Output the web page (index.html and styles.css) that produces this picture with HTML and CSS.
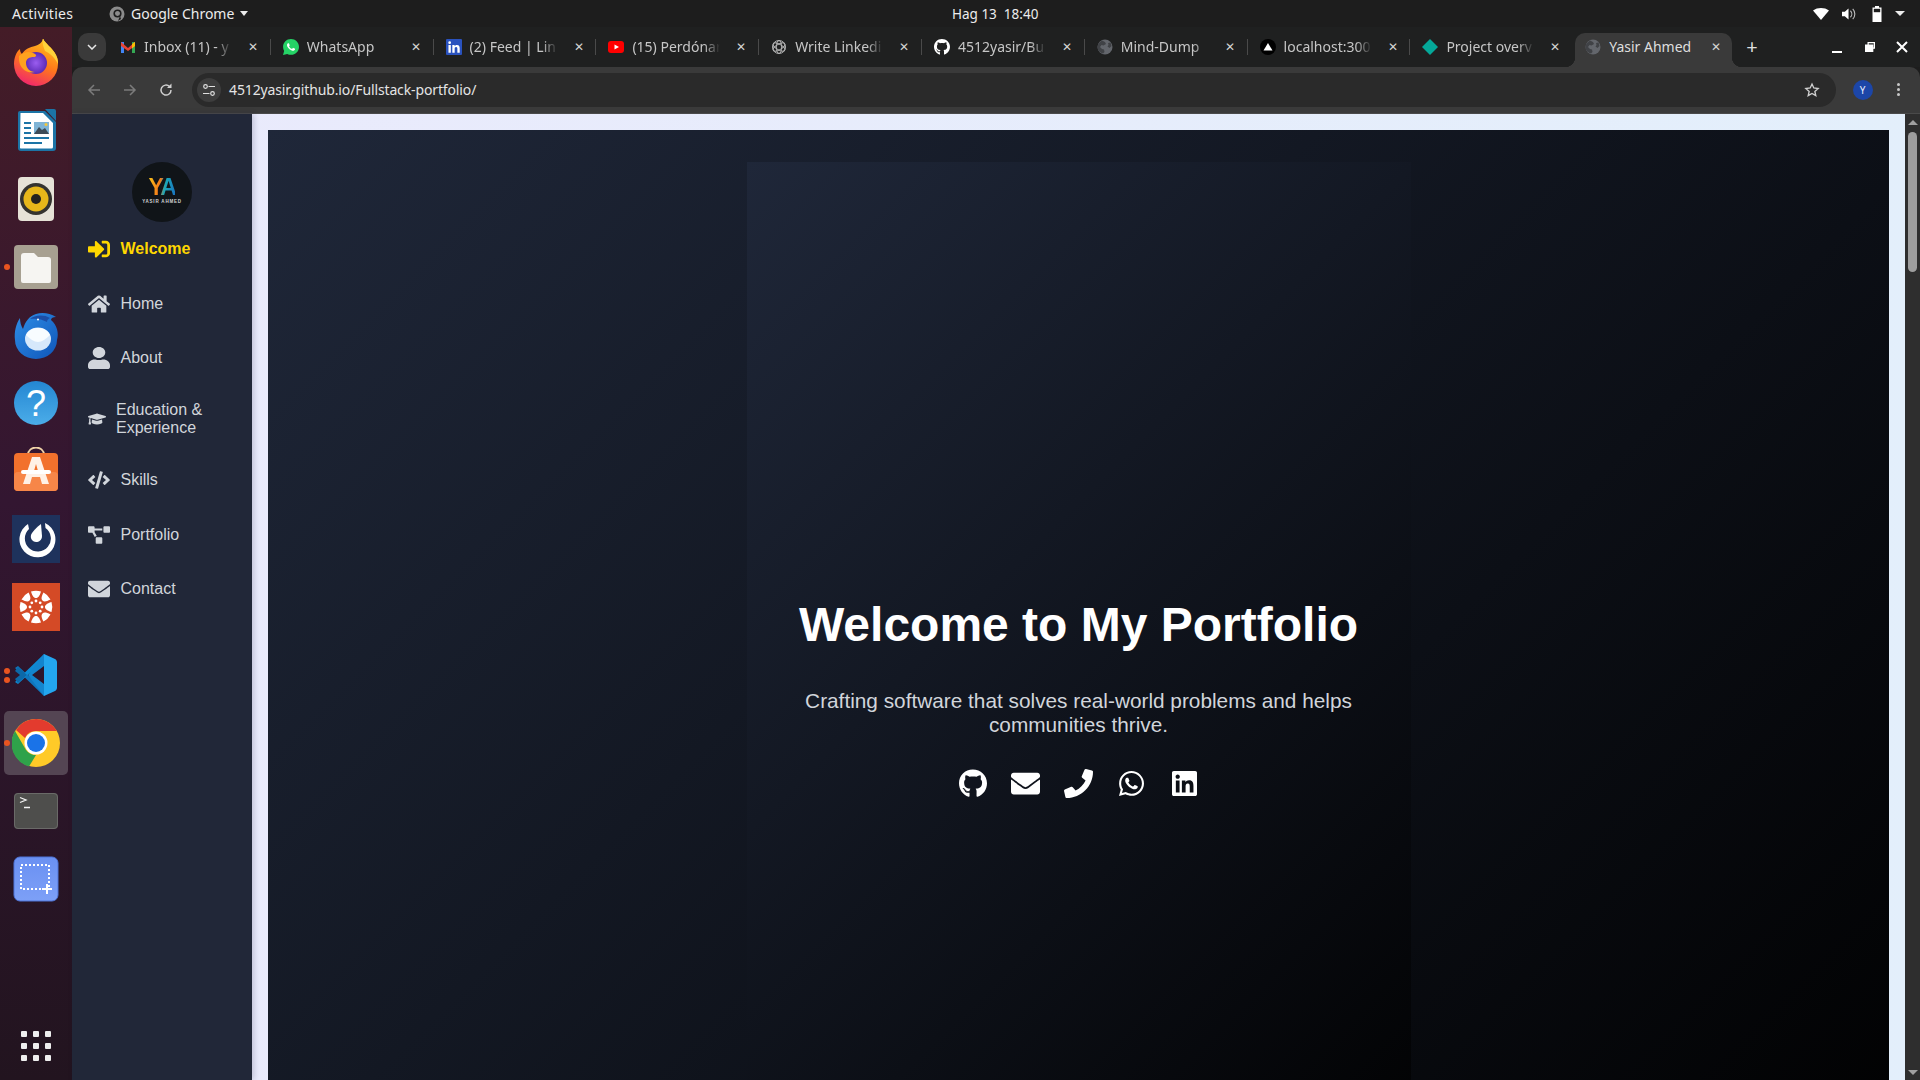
FILE: index.html
```html
<!DOCTYPE html>
<html lang="en">
<head>
    <meta charset="UTF-8">
    <title>Yasir Ahmed</title>
    <link rel="stylesheet" href="styles.css">
</head>
<body>
    <svg class="sprite" xmlns="http://www.w3.org/2000/svg">
        <symbol id="i-github" viewBox="0 0 496 512"><path d="M165.9 397.4c0 2-2.3 3.6-5.2 3.6-3.3.3-5.6-1.3-5.6-3.6 0-2 2.3-3.6 5.2-3.6 3-.3 5.6 1.3 5.6 3.6zm-31.1-4.5c-.7 2 1.3 4.3 4.3 4.9 2.6 1 5.6 0 6.2-2s-1.3-4.3-4.3-5.2c-2.6-.7-5.5.3-6.2 2.3zm44.2-1.7c-2.9.7-4.9 2.6-4.6 4.9.3 2 2.9 3.3 5.9 2.6 2.9-.7 4.9-2.6 4.6-4.6-.3-1.9-3-3.2-5.9-2.9zM244.8 8C106.1 8 0 113.3 0 252c0 110.9 69.8 205.8 169.5 239.2 12.8 2.3 17.3-5.6 17.3-12.1 0-6.2-.3-40.4-.3-61.4 0 0-70 15-84.7-29.8 0 0-11.4-29.1-27.8-36.6 0 0-22.9-15.7 1.6-15.4 0 0 24.9 2 38.6 25.8 21.9 38.6 58.6 27.5 72.9 20.9 2.3-16 8.8-27.1 16-33.7-55.9-6.2-112.3-14.3-112.3-110.5 0-27.5 7.6-41.3 23.6-58.9-2.6-6.5-11.1-33.3 2.6-67.9 20.9-6.5 69 27 69 27 20-5.6 41.5-8.5 62.8-8.5s42.8 2.9 62.8 8.5c0 0 48.1-33.6 69-27 13.7 34.7 5.2 61.4 2.6 67.9 16 17.7 25.8 31.5 25.8 58.9 0 96.5-58.9 104.2-114.8 110.5 9.2 7.9 17 22.9 17 46.4 0 33.7-.3 75.4-.3 83.6 0 6.5 4.6 14.4 17.3 12.1C428.2 457.8 496 362.9 496 252 496 113.3 383.5 8 244.8 8zM97.2 352.9c-1.3 1-1 3.3.7 5.2 1.6 1.6 3.9 2.3 5.2 1 1.3-1 1-3.3-.7-5.2-1.6-1.6-3.9-2.3-5.2-1zm-10.8-8.1c-.7 1.3.3 2.9 2.3 3.9 1.6 1 3.6.7 4.3-.7.7-1.3-.3-2.9-2.3-3.9-2-.6-3.6-.3-4.3.7zm32.4 35.6c-1.6 1.3-1 4.3 1.3 6.2 2.3 2.3 5.2 2.6 6.5 1 1.3-1.3.7-4.3-1.3-6.2-2.2-2.3-5.2-2.6-6.5-1zm-11.4-14.7c-1.6 1-1.6 3.6 0 5.9 1.6 2.3 4.3 3.3 5.6 2.3 1.6-1.3 1.6-3.9 0-6.2-1.4-2.3-4-3.3-5.6-2z"/></symbol>
        <symbol id="i-envelope" viewBox="0 0 512 512"><path d="M502.3 190.8c3.9-3.1 9.7-.2 9.7 4.7V400c0 26.5-21.5 48-48 48H48c-26.5 0-48-21.5-48-48V195.6c0-5 5.7-7.8 9.7-4.7 22.4 17.4 52.1 39.5 154.1 113.6 21.1 15.4 56.7 47.8 92.2 47.6 35.7.3 72-32.8 92.3-47.6 102-74.1 131.6-96.3 154-113.7zM256 320c23.2.4 56.6-29.2 73.4-41.4 132.7-96.3 142.8-104.7 173.4-128.7 5.8-4.5 9.2-11.5 9.2-18.9v-19c0-26.5-21.5-48-48-48H48C21.5 64 0 85.5 0 112v19c0 7.4 3.4 14.3 9.2 18.9 30.6 23.9 40.7 32.4 173.4 128.7 16.8 12.2 50.2 41.8 73.4 41.4z"/></symbol>
        <symbol id="i-phone" viewBox="0 0 512 512"><path d="M493.4 24.6l-104-24c-11.3-2.6-22.9 3.3-27.5 13.9l-48 112c-4.2 9.8-1.4 21.3 6.9 28l60.6 49.6c-36 76.7-98.9 140.5-177.2 177.2l-49.6-60.6c-6.8-8.3-18.2-11.1-28-6.9l-112 48C3.9 366.5-2 378.1.6 389.4l24 104C27.1 504.2 36.7 512 48 512c256.1 0 464-207.5 464-464 0-11.2-7.7-20.9-18.6-23.4z"/></symbol>
        <symbol id="i-whatsapp" viewBox="0 0 448 512"><path d="M380.9 97.1C339 55.1 283.2 32 223.9 32c-122.4 0-222 99.6-222 222 0 39.1 10.2 77.3 29.6 111L0 480l117.7-30.9c32.4 17.7 68.9 27 106.1 27h.1c122.3 0 224.1-99.6 224.1-222 0-59.3-25.2-115-67.1-157zm-157 341.6c-33.2 0-65.7-8.9-94-25.7l-6.7-4-69.8 18.3L72 359.2l-4.4-7c-18.5-29.4-28.2-63.3-28.2-98.2 0-101.7 82.8-184.5 184.6-184.5 49.3 0 95.6 19.2 130.4 54.1 34.8 34.9 56.2 81.2 56.1 130.5 0 101.8-84.9 184.6-186.6 184.6zm101.2-138.2c-5.5-2.8-32.8-16.2-37.9-18-5.1-1.9-8.8-2.8-12.5 2.8-3.7 5.6-14.3 18-17.6 21.8-3.2 3.7-6.5 4.2-12 1.4-32.6-16.3-54-29.1-75.5-66-5.7-9.8 5.7-9.1 16.3-30.3 1.8-3.7.9-6.9-.5-9.7-1.4-2.8-12.5-30.1-17.1-41.2-4.5-10.8-9.1-9.3-12.5-9.5-3.2-.2-6.9-.2-10.6-.2-3.7 0-9.7 1.4-14.8 6.9-5.1 5.6-19.4 19-19.4 46.3 0 27.3 19.9 53.7 22.6 57.4 2.8 3.7 39.1 59.7 94.8 83.8 35.2 15.2 49 16.5 66.6 13.9 10.7-1.6 32.8-13.4 37.4-26.4 4.6-13 4.6-24.1 3.2-26.4-1.3-2.5-5-3.9-10.5-6.6z"/></symbol>
        <symbol id="i-linkedin" viewBox="0 0 448 512"><path d="M416 32H31.9C14.3 32 0 46.5 0 64.3v383.4C0 465.5 14.3 480 31.9 480H416c17.6 0 32-14.5 32-32.3V64.3c0-17.8-14.4-32.3-32-32.3zM135.4 416H69V202.2h66.5V416zm-33.2-243c-21.3 0-38.5-17.3-38.5-38.5S80.9 96 102.2 96c21.2 0 38.5 17.3 38.5 38.5 0 21.3-17.2 38.5-38.5 38.5zm282.1 243h-66.4V312c0-24.8-.5-56.7-34.5-56.7-34.6 0-39.9 27-39.9 54.9V416h-66.4V202.2h63.7v29.2h.9c8.9-16.8 30.6-34.5 62.9-34.5 67.2 0 79.7 44.3 79.7 101.9V416z"/></symbol>
        <symbol id="i-globe" viewBox="0 0 16 16"><circle cx="8" cy="8" r="7.5" fill="#63666c"/><path d="M5 1.5l3 1.5 1 2-2.500 1.500L4.500 6 3 8l2 2 2 .5.500 2.500-1.500 1.500A6.500 6.500 0 0 1 2 4zM11 4l2.500-.5 1 3.500-2 2-2-1.500 1-1.500z" fill="#404246"/></symbol>
    </svg>

    <header class="topbar">
        <div class="topbar-left">
            <span class="activities">Activities</span>
            <span class="app-menu">
                <svg class="app-icon" viewBox="0 0 16 16"><circle cx="8" cy="8" r="7.500" fill="#8b8b8b"/><circle cx="8.500" cy="7.500" r="3.300" fill="none" stroke="#1d1d1d" stroke-width="1.600"/><path d="M11 10l-2 5 3-2z" fill="#1d1d1d"/></svg>
                Google Chrome
                <i class="caret"></i>
            </span>
        </div>
        <div class="clock">Hag 13&nbsp;&nbsp;18:40</div>
        <div class="tray">
            <svg width="16" height="12" viewBox="0 0 16 12"><path d="M0 2.500C4.500-.8 11.500-.8 16 2.500L8 12z" fill="#fff"/></svg>
            <svg width="14" height="14" viewBox="0 0 15 14"><path d="M0 4.500h3L7 1v12L3 9.500H0z" fill="#fff"/><path d="M9 3.500c2 2 2 5 0 7M11.500 1.500c3 3 3 8 0 11" fill="none" stroke="#bbb" stroke-width="1.200"/></svg>
            <svg class="battery" width="10" height="16" viewBox="0 0 10 16"><path d="M3 0h4v1.500h2.500V16H.5V1.500H3z" fill="#fff"/><rect x="1.800" y="2.800" width="6.400" height="3.400" fill="#1d1d1d"/></svg>
            <i class="caret caret-tray"></i>
        </div>
    </header>

    <div class="desktop">
        <aside class="dock">
            <div class="dock-item">
                <svg width="48" height="48" viewBox="0 3 48 48"><defs><linearGradient id="ffa" x1="0.700" y1="0" x2="0.300" y2="1"><stop offset="0" stop-color="#ffc31f"/><stop offset="0.500" stop-color="#ff7a1a"/><stop offset="1" stop-color="#f0246e"/></linearGradient><radialGradient id="ffb"><stop offset="0" stop-color="#9a5df0"/><stop offset="1" stop-color="#5c2bb5"/></radialGradient></defs><path d="M31 2c1 5 9 9 13 17 2 4 2 7 2 9a22 22 0 0 1-44 0c0-6 2-12 6-15 0 3 1 4 2 5 3-5 8-7 13-8 4-1 8-4 8-8z" fill="url(#ffa)"/><path d="M31 2c1 5 9 9 13 17 2 4 2 7 2 9-3-6-8-11-13-13-2-5-3-9-2-13z" fill="#ffd23a"/><circle cx="24" cy="27" r="11" fill="url(#ffb)"/><path d="M7 20c5-5 12-5 16-2 2 1 1 3-1 3-5 0-8 2-8 6 0 5 4 9 9 9-8 2-15-3-16-12z" fill="#ffa21f"/></svg>
            </div>
            <div class="dock-item">
                <svg width="48" height="48" viewBox="0 0 48 48"><path d="M8 4h25l11 11v26a3 3 0 0 1-3 3H9a3 3 0 0 1-3-3V6a2 2 0 0 1 2-2z" fill="#1c74a6"/><path d="M8.500 6H31l10 10v24a1.500 1.500 0 0 1-1.500 1.500h-31A1 1 0 0 1 8 40.500z" fill="#fff"/><path d="M33 2h9a2 2 0 0 1 2 2v10z" fill="#1c74a6"/><path d="M12 15h7v2h-7zM12 20h7v2h-7zM12 25h7v2h-7zM12 30h25v2H12zM12 35h18v2H12z" fill="#1c74a6"/><rect x="22" y="15" width="15" height="12" fill="#7fb4d6"/><path d="M22 27l5-7 3 3 3-2 4 6z" fill="#3d4b57"/><circle cx="34" cy="17.500" r="1.500" fill="#f3c63d"/></svg>
            </div>
            <div class="dock-item">
                <svg width="48" height="48" viewBox="0 0 48 48"><rect x="6" y="2" width="36" height="44" rx="4" fill="#e6e2d7"/><circle cx="24" cy="24" r="16" fill="#34332f"/><circle cx="24" cy="24" r="12.500" fill="#e7b71a"/><circle cx="24" cy="24" r="5" fill="#23221f"/></svg>
            </div>
            <div class="dock-item">
                <i class="run-dot"></i>
                <svg width="48" height="48" viewBox="0 0 48 48"><rect x="2" y="2" width="44" height="44" rx="4" fill="#a7a091"/><path d="M9 13a3 3 0 0 1 3-3h10l4 4h10a3 3 0 0 1 3 3v21a2 2 0 0 1-2 2H11a2 2 0 0 1-2-2z" fill="#f6f5f2"/></svg>
            </div>
            <div class="dock-item">
                <svg width="48" height="48" viewBox="0 0 48 48"><defs><linearGradient id="tb" x1="0" y1="0" x2="1" y2="1"><stop offset="0" stop-color="#2f8fe8"/><stop offset="1" stop-color="#0f55b8"/></linearGradient></defs><path d="M24 3c6-2 14-1 20 3-3 0-5 1-5 3 6 5 8 13 6 20a21 19 0 0 1-42 0c-1-8 1-16 5-22 0 4 1 8 3 11 2-7 6-13 13-15z" fill="url(#tb)"/><path d="M18 8c4-4 14-5 20-1-2 1-3 2-3 4-5-3-11-4-17-3z" fill="#1c4ea6"/><circle cx="26" cy="8.500" r="1" fill="#fff"/><ellipse cx="26" cy="28" rx="13" ry="11.500" fill="#d6e8fb"/><path d="M14 24c4 4 8 7 12 7s8-3 12-7c-3-6-8-7-12-7s-9 1-12 7z" fill="#f8fcff"/></svg>
            </div>
            <div class="dock-item">
                <svg width="48" height="48" viewBox="0 0 48 48"><defs><linearGradient id="hp" x1="0" y1="0" x2="0" y2="1"><stop offset="0" stop-color="#2486d2"/><stop offset="1" stop-color="#4bade9"/></linearGradient></defs><circle cx="24" cy="24" r="22" fill="url(#hp)"/><text x="24" y="37" class="dock-glyph" font-size="36">?</text></svg>
            </div>
            <div class="dock-item">
                <svg width="48" height="48" viewBox="0 3 48 48"><path d="M16 11c0-10 16-10 16 0" fill="none" stroke="#f0d3a8" stroke-width="1.800"/><rect x="2" y="9" width="44" height="38" rx="4" fill="#f2712c"/><rect x="2" y="28" width="44" height="19" rx="4" fill="#f78648"/><path d="M20 13h8l9 27h-7l-2-7h-8l-2 7h-7zM22 27h4l-2-7z" fill="#fff1e6"/><rect x="9" y="26" width="30" height="4" rx="2" fill="#fff"/></svg>
            </div>
            <div class="dock-item">
                <svg width="48" height="48" viewBox="0 0 48 48"><rect width="48" height="48" fill="#1e325c"/><path d="M16 9A18 18 0 1 0 33 8l.5 5a13 13 0 1 1-16.500 1z" fill="#fff"/><path d="M29 9l1 12c0 4-3 6-6 6s-6-3-5-7c1-3 6-8 10-11z" fill="#fff"/></svg>
            </div>
            <div class="dock-item">
                <svg width="48" height="48" viewBox="0 0 48 48"><rect width="48" height="48" fill="#d44a26"/><g fill="#fff"><path d="M15 24c0-1.800-1.500-3.500-6.500-5a16 16 0 0 0 0 10c5-1.500 6.500-3.200 6.500-5zM33 24c0 1.800 1.500 3.500 6.500 5a16 16 0 0 0 0-10c-5 1.500-6.500 3.200-6.500 5zM24 15c1.800 0 3.500-1.500 5-6.500a16 16 0 0 0-10 0c1.500 5 3.200 6.500 5 6.500zM24 33c-1.800 0-3.500 1.500-5 6.500a16 16 0 0 0 10 0c-1.500-5-3.200-6.500-5-6.500zM17.500 17.500c1.300-1.300 1.400-3.500-1-8a16 16 0 0 0-7 7c4.500 2.400 6.700 2.300 8 1zM30.500 30.500c-1.300 1.300-1.400 3.500 1 8a16 16 0 0 0 7-7c-4.500-2.400-6.700-2.300-8-1zM30.500 17.500c1.300 1.300 3.500 1.400 8-1a16 16 0 0 0-7-7c-2.400 4.500-2.300 6.700-1 8zM17.500 30.500c-1.300-1.300-3.500-1.400-8 1a16 16 0 0 0 7 7c2.400-4.500 2.300-6.700 1-8z"/><circle cx="24" cy="18" r="1.400"/><circle cx="24" cy="30" r="1.400"/><circle cx="18" cy="24" r="1.400"/><circle cx="30" cy="24" r="1.400"/><circle cx="19.800" cy="19.800" r="1.400"/><circle cx="28.200" cy="19.800" r="1.400"/><circle cx="19.800" cy="28.200" r="1.400"/><circle cx="28.200" cy="28.200" r="1.400"/></g></svg>
            </div>
            <div class="dock-item">
                <i class="run-dot run-dot-a"></i><i class="run-dot run-dot-b"></i>
                <svg width="48" height="48" viewBox="0 0 48 48"><path d="M3 17l3-2 28 26-2 4z" fill="#0f76bd"/><path d="M3 31l3 2L34 7l-2-4z" fill="#0e8ad3"/><path d="M8 24l-5 4 3 4 9-8-9-8-3 4z" fill="#0c68a8"/><path d="M32 3l11 5c1 .5 2 2 2 3v26c0 1-1 2.500-2 3l-11 5z" fill="#23a6ef"/><path d="M32 3l-16 21 16 21V33L20 24l12-9z" fill="#1385cf"/></svg>
            </div>
            <div class="dock-item dock-item-active">
                <i class="run-dot"></i>
                <svg width="48" height="48" viewBox="0 0 48 48"><circle cx="24" cy="24" r="24" fill="#ffca28"/><path d="M24 0a24 24 0 0 1 21 12H24a12 12 0 0 0-11 7L4 11A24 24 0 0 1 24 0z" fill="#e33b2e"/><path d="M3 12l11 19a12 12 0 0 0 10 5l-7 11.500A24 24 0 0 1 3 12z" fill="#2fa24a"/><circle cx="24" cy="24" r="11.500" fill="#fff"/><circle cx="24" cy="24" r="9" fill="#1a73e8"/></svg>
            </div>
            <div class="dock-item">
                <svg width="48" height="48" viewBox="0 0 48 48"><rect x="2" y="6" width="44" height="36" rx="4" fill="#4e4e4c"/><rect x="2.500" y="6.500" width="43" height="35" rx="3.500" fill="none" stroke="#6a6a68"/><path d="M8 10.500l6 2.500-6 2.500M12 20.500h6" fill="none" stroke="#f2f2f2" stroke-width="1.300"/></svg>
            </div>
            <div class="dock-item">
                <svg width="48" height="48" viewBox="0 0 48 48"><defs><linearGradient id="sc" x1="0" y1="0" x2="0" y2="1"><stop offset="0" stop-color="#6a90f2"/><stop offset="1" stop-color="#7da0f7"/></linearGradient></defs><rect x="2" y="2" width="44" height="44" rx="6" fill="url(#sc)" stroke="#4f75d8"/><rect x="9" y="10" width="28" height="24" fill="none" stroke="#fff" stroke-width="2" stroke-dasharray="2 2"/><path d="M30 34h10M35 29v10" stroke="#fff" stroke-width="2"/></svg>
            </div>
            <div class="dock-grid">
                <i></i><i></i><i></i><i></i><i></i><i></i><i></i><i></i><i></i>
            </div>
        </aside>

        <div class="browser">
            <div class="tabstrip">
                <button class="tab-search"><svg width="10" height="6" viewBox="0 0 10 6"><path d="M1 1l4 4 4-4" fill="none" stroke="#e6e6e6" stroke-width="1.500"/></svg></button>
                <div class="tab">
                    <svg class="favicon" viewBox="0 0 16 16"><path d="M1 3h3v11H1z" fill="#4285f4"/><path d="M12 3h3v11h-3z" fill="#34a853"/><path d="M1 3l7 6 7-6v4L8 12 1 7z" fill="#ea4335"/><path d="M15 3v4l-3 2.500V5z" fill="#fbbc04"/></svg>
                    <span class="tab-title">Inbox (11) - y</span><span class="tab-x">✕</span>
                </div>
                <div class="tab">
                    <svg class="favicon" viewBox="0 32 448 448"><path d="M224 32C101 32 2 131 2 254c0 39 10 77 30 111L0 480l118-31c32 18 69 27 106 27 122 0 224-100 224-222C448 131 347 32 224 32z" fill="#25d366"/><path d="M325 300c-5-3-33-16-38-18-5-2-9-3-12 3-4 6-15 18-18 22-3 4-6 4-12 1-33-16-54-29-75-66-6-10 6-9 16-30 2-4 1-7 0-10-1-3-13-30-17-41-5-11-9-9-13-10h-10c-4 0-10 1-15 7-5 6-19 19-19 46s20 54 23 57c3 4 39 60 95 84 35 15 49 17 67 14 11-2 33-13 37-26 5-13 5-24 3-26-1-3-5-4-11-7z" fill="#fff"/></svg>
                    <span class="tab-title">WhatsApp</span><span class="tab-x">✕</span>
                </div>
                <div class="tab">
                    <svg class="favicon" viewBox="0 32 448 448"><rect y="32" width="448" height="448" rx="30" fill="#2a52be"/><path d="M135 416H69V202h66zM102 173a38 38 0 1 1 0-77 38 38 0 0 1 0 77zM384 416h-66V312c0-25 0-57-35-57-34 0-40 27-40 55v106h-66V202h64v29h1c9-17 30-34 63-34 67 0 79 44 79 102z" fill="#fff"/></svg>
                    <span class="tab-title">(2) Feed | Lin</span><span class="tab-x">✕</span>
                </div>
                <div class="tab">
                    <svg class="favicon" viewBox="0 0 16 16"><rect y="2" width="16" height="12" rx="3" fill="#f00"/><path d="M6.500 5.500L11 8l-4.500 2.500z" fill="#fff"/></svg>
                    <span class="tab-title">(15) Perdónar</span><span class="tab-x">✕</span>
                </div>
                <div class="tab">
                    <svg class="favicon" viewBox="0 0 16 16"><g fill="none" stroke="#b5b5b5" stroke-width="1"><circle cx="8" cy="8" r="6.500"/><ellipse cx="8" cy="8" rx="6.500" ry="2.700" transform="rotate(30 8 8)"/><ellipse cx="8" cy="8" rx="6.500" ry="2.700" transform="rotate(90 8 8)"/><ellipse cx="8" cy="8" rx="6.500" ry="2.700" transform="rotate(150 8 8)"/></g></svg>
                    <span class="tab-title">Write Linkedi</span><span class="tab-x">✕</span>
                </div>
                <div class="tab">
                    <svg class="favicon" viewBox="0 8 496 496" fill="#fff"><use href="#i-github" width="496" height="512"/></svg>
                    <span class="tab-title">4512yasir/Bu</span><span class="tab-x">✕</span>
                </div>
                <div class="tab">
                    <svg class="favicon" viewBox="0 0 16 16"><use href="#i-globe" width="16" height="16"/></svg>
                    <span class="tab-title">Mind-Dump</span><span class="tab-x">✕</span>
                </div>
                <div class="tab">
                    <svg class="favicon" viewBox="0 0 16 16"><circle cx="8" cy="8" r="8" fill="#000"/><path d="M8 4l4.500 7.500h-9z" fill="#fff"/></svg>
                    <span class="tab-title">localhost:300</span><span class="tab-x">✕</span>
                </div>
                <div class="tab tab-noline">
                    <svg class="favicon" viewBox="0 0 16 16"><path d="M8 0l8 8-8 8-8-8z" fill="#05a899"/></svg>
                    <span class="tab-title">Project overv</span><span class="tab-x">✕</span>
                </div>
                <div class="tab tab-active">
                    <svg class="favicon" viewBox="0 0 16 16"><use href="#i-globe" width="16" height="16"/></svg>
                    <span class="tab-title">Yasir Ahmed</span><span class="tab-x">✕</span>
                </div>
                <span class="tab-new">+</span>
                <div class="window-btns">
                    <svg width="12" height="12" viewBox="0 0 12 12"><path d="M0 10h10v2H0z" fill="#fff"/></svg>
                    <svg width="10" height="10" viewBox="0 0 12 12"><path d="M3 0h9v8h-2v4H0V3h3zM4.500 1.500V3H10v3.500h.500v-5z" fill="#fff" fill-rule="evenodd"/></svg>
                    <svg width="12" height="12" viewBox="0 0 12 12"><path d="M1 1l10 10M11 1L1 11" stroke="#fff" stroke-width="2"/></svg>
                </div>
            </div>

            <div class="toolbar">
                <svg class="tool" width="16" height="16" viewBox="0 0 16 16"><path d="M14 8H3M8 3L3 8l5 5" fill="none" stroke="#7b7b7b" stroke-width="1.500"/></svg>
                <svg class="tool" width="16" height="16" viewBox="0 0 16 16"><path d="M2 8h11M8 3l5 5-5 5" fill="none" stroke="#7b7b7b" stroke-width="1.500"/></svg>
                <svg class="tool" width="16" height="16" viewBox="0 0 16 16"><path d="M13 8a5 5 0 1 1-1.500-3.500" fill="none" stroke="#d0d0d0" stroke-width="1.500"/><path d="M13.500 1.500v4.500H9z" fill="#d0d0d0"/></svg>
                <div class="omnibox">
                    <span class="site-info"><svg width="14" height="14" viewBox="0 0 14 14" fill="none" stroke="#e0e0e0" stroke-width="1.200"><circle cx="3.500" cy="3.500" r="1.800"/><path d="M6.500 3.500H13M1 10.500h6.500"/><circle cx="10.500" cy="10.500" r="1.800"/></svg></span>
                    <span class="url">4512yasir.github.io/Fullstack-portfolio/</span>
                    <svg class="star" width="16" height="16" viewBox="0 0 24 24"><path d="M12 3l2.700 6 6.500.7-4.900 4.400 1.400 6.400L12 17.200 6.300 20.500l1.400-6.400-4.900-4.400 6.500-.7z" fill="none" stroke="#d0d0d0" stroke-width="2"/></svg>
                </div>
                <span class="avatar">Y</span>
                <span class="kebab"><i></i><i></i><i></i></span>
            </div>

            <div class="page">
                <aside class="sidebar">
                    <div class="logo">
                        <span class="logo-ya">YA</span>
                        <span class="logo-name">YASIR AHMED</span>
                    </div>
                    <nav class="side-nav">
                        <a class="nav-item nav-item-active" href="#">
                            <svg class="nav-icon" viewBox="0 0 512 512"><path d="M416 448h-84c-6.600 0-12-5.400-12-12v-40c0-6.600 5.400-12 12-12h84c17.700 0 32-14.300 32-32V160c0-17.700-14.300-32-32-32h-84c-6.600 0-12-5.400-12-12V76c0-6.600 5.400-12 12-12h84c53 0 96 43 96 96v192c0 53-43 96-96 96zm-47-201L201 79c-15-15-41-4.500-41 17v96H24c-13.300 0-24 10.700-24 24v96c0 13.300 10.700 24 24 24h136v96c0 21.500 26 32 41 17l168-168c9.300-9.400 9.300-24.600 0-34z"/></svg>
                            Welcome
                        </a>
                        <a class="nav-item" href="#">
                            <svg class="nav-icon" viewBox="0 0 576 512"><path d="M280.370 148.260L96 300.110V464a16 16 0 0 0 16 16l112.060-.29a16 16 0 0 0 15.920-16V368a16 16 0 0 1 16-16h64a16 16 0 0 1 16 16v95.640a16 16 0 0 0 16 16.050L464 480a16 16 0 0 0 16-16V300L295.670 148.260a12.190 12.190 0 0 0-15.300 0zM571.600 251.470L488 182.560V44.050a12 12 0 0 0-12-12h-56a12 12 0 0 0-12 12v72.610L318.470 43a48 48 0 0 0-61 0L4.340 251.470a12 12 0 0 0-1.600 16.900l25.500 31A12 12 0 0 0 45.150 301l235.220-193.740a12.190 12.190 0 0 1 15.300 0L530.900 301a12 12 0 0 0 16.900-1.600l25.500-31a12 12 0 0 0-1.700-16.930z"/></svg>
                            Home
                        </a>
                        <a class="nav-item" href="#">
                            <svg class="nav-icon" viewBox="0 0 448 512" preserveAspectRatio="none"><path d="M224 256c70.700 0 128-57.300 128-128S294.700 0 224 0 96 57.300 96 128s57.300 128 128 128zm89.600 32h-16.700c-22.200 10.200-46.900 16-72.900 16s-50.600-5.800-72.900-16h-16.700C60.200 288 0 348.200 0 422.400V464c0 26.500 21.500 48 48 48h352c26.500 0 48-21.500 48-48v-41.600c0-74.200-60.200-134.400-134.400-134.400z"/></svg>
                            About
                        </a>
                        <a class="nav-item nav-item-wrap" href="#">
                            <svg class="nav-icon nav-icon-small" viewBox="0 0 640 512"><path d="M622.340 153.200L343.400 67.500c-15.200-4.670-31.600-4.670-46.790 0L17.660 153.200c-23.540 7.230-23.540 38.360 0 45.590l48.630 14.940c-10.670 13.190-17.230 29.280-17.880 46.900C38.780 266.150 32 276.110 32 288c0 10.780 5.680 19.850 13.860 25.650L20.330 428.530C18.110 438.520 25.710 448 35.940 448h56.110c10.240 0 17.840-9.480 15.620-19.470L82.140 313.650C90.320 307.850 96 298.780 96 288c0-11.570-6.470-21.250-15.660-26.870.76-15.020 8.440-28.300 20.690-36.720L296.600 284.500c9.060 2.780 26.440 6.250 46.790 0l278.950-85.700c23.550-7.240 23.550-38.360 0-45.600zM352.790 315.090c-28.530 8.760-52.840 3.920-65.590 0l-145.020-44.550L128 384c0 35.350 85.960 64 192 64s192-28.650 192-64l-14.180-113.470-145.030 44.560z"/></svg>
                            Education &amp; Experience
                        </a>
                        <a class="nav-item" href="#">
                            <svg class="nav-icon" viewBox="0 0 640 512"><path d="M278.900 511.500l-61-17.700c-6.400-1.800-10-8.500-8.200-14.900L346.200 8.700c1.800-6.400 8.500-10 14.900-8.200l61 17.700c6.400 1.800 10 8.500 8.200 14.900L293.800 503.300c-1.900 6.400-8.500 10.100-14.900 8.200zm-114-112.200l43.500-46.400c4.600-4.900 4.300-12.700-.8-17.200L117 256l90.600-79.700c5.100-4.500 5.500-12.300.8-17.200l-43.500-46.400c-4.500-4.800-12.100-5.100-17-.5L3.800 247.200c-5.100 4.700-5.100 12.800 0 17.500l144.100 135.100c4.900 4.600 12.500 4.400 17-.5zm327.200.6l144.100-135.100c5.100-4.700 5.100-12.800 0-17.500L492.100 112.100c-4.800-4.500-12.400-4.300-17 .5L431.600 159c-4.600 4.900-4.300 12.700.8 17.200L523 256l-90.600 79.700c-5.100 4.500-5.500 12.300-.8 17.200l43.500 46.400c4.500 4.900 12.100 5.100 17 .6z"/></svg>
                            Skills
                        </a>
                        <a class="nav-item" href="#">
                            <svg class="nav-icon" viewBox="0 0 640 512"><path d="M384 320H256c-17.670 0-32 14.330-32 32v128c0 17.670 14.330 32 32 32h128c17.670 0 32-14.330 32-32V352c0-17.670-14.330-32-32-32zM192 32c0-17.670-14.330-32-32-32H32C14.330 0 0 14.330 0 32v128c0 17.670 14.330 32 32 32h95.720l73.160 128.040C211.980 300.980 232.400 288 256 288h.28L192 175.510V128h224V64H192V32zM608 0H480c-17.670 0-32 14.330-32 32v128c0 17.670 14.330 32 32 32h128c17.670 0 32-14.330 32-32V32c0-17.670-14.330-32-32-32z"/></svg>
                            Portfolio
                        </a>
                        <a class="nav-item" href="#">
                            <svg class="nav-icon" viewBox="0 0 512 512"><use href="#i-envelope" width="512" height="512"/></svg>
                            Contact
                        </a>
                    </nav>
                </aside>

                <main class="content">
                    <section class="hero">
                        <div class="hero-inner">
                            <h1 class="hero-title">Welcome to My Portfolio</h1>
                            <p class="hero-sub">Crafting software that solves real-world problems and helps communities thrive.</p>
                            <div class="hero-links">
                                <svg width="28" height="29" viewBox="0 0 496 512"><use href="#i-github" width="496" height="512"/></svg>
                                <svg width="29" height="29" viewBox="0 0 512 512"><use href="#i-envelope" width="512" height="512"/></svg>
                                <svg width="29" height="29" viewBox="0 0 512 512"><use href="#i-phone" width="512" height="512"/></svg>
                                <svg width="25" height="29" viewBox="0 0 448 512"><use href="#i-whatsapp" width="448" height="512"/></svg>
                                <svg width="25" height="29" viewBox="0 0 448 512"><use href="#i-linkedin" width="448" height="512"/></svg>
                            </div>
                        </div>
                    </section>
                </main>

                <div class="scrollbar">
                    <i class="arrow-up"></i>
                    <i class="thumb"></i>
                    <i class="arrow-down"></i>
                </div>
            </div>
        </div>
    </div>
</body>
</html>
```

FILE: styles.css
```css
*{
    box-sizing: border-box;
}
html, body{
    margin: 0;
    padding: 0;
    width: 1920px;
    height: 1080px;
    overflow: hidden;
}
body{
    display: flex;
    flex-direction: column;
    background: #1d1d1d;
    font-family: "Noto Sans", sans-serif;
}
.sprite{
    display: none;
}

/* gnome top bar */
.topbar{
    height: 27px;
    flex: none;
    display: grid;
    grid-template-columns: 952px 1fr auto;
    align-items: center;
    background: #1d1d1d;
    color: #ececec;
    font-size: 14px;
}
.topbar-left{
    display: flex;
    align-items: center;
    padding-left: 12px;
}
.activities{
    width: 97px;
    letter-spacing: 0.3px;
}
.app-menu{
    display: flex;
    align-items: center;
    gap: 6px;
}
.app-icon{
    width: 16px;
    height: 16px;
}
.caret{
    width: 0;
    height: 0;
    border: 4.5px solid transparent;
    border-top: 5px solid #ececec;
    border-bottom: 0;
}
.clock{
    font-size: 13.5px;
}
.tray{
    display: flex;
    align-items: center;
    gap: 13px;
    padding-right: 15px;
}
.battery{
    margin-left: 3px;
}
.caret-tray{
    border-width: 5px;
    border-bottom: 0;
}

/* dock */
.desktop{
    flex: 1;
    display: flex;
    min-height: 0;
}
.dock{
    width: 72px;
    flex: none;
    display: flex;
    flex-direction: column;
    padding-top: 2px;
    background: linear-gradient(180deg, #441c27 0%, #331631 45%, #22141f 100%);
}
.dock-item{
    position: relative;
    height: 68px;
    flex: none;
    display: flex;
    align-items: center;
    justify-content: center;
}
.dock-item-active::before{
    content: "";
    position: absolute;
    left: 4px;
    right: 4px;
    top: 2px;
    bottom: 2px;
    border-radius: 5px;
    background: #544553;
}
.dock-item svg{
    position: relative;
}
.dock-glyph{
    fill: #fff;
    font-family: "Liberation Sans", sans-serif;
    text-anchor: middle;
}
.run-dot{
    position: absolute;
    left: 4px;
    top: 31px;
    width: 6px;
    height: 6px;
    border-radius: 50%;
    background: #e95420;
    z-index: 1;
}
.run-dot-a{
    top: 27px;
}
.run-dot-b{
    top: 36px;
}
.dock-grid{
    margin-top: auto;
    margin-bottom: 19px;
    align-self: center;
    display: grid;
    grid-template-columns: repeat(3, 6px);
    gap: 6px;
}
.dock-grid i{
    height: 6px;
    border-radius: 1px;
    background: #eeeeee;
}

/* chrome */
.browser{
    flex: 1;
    min-width: 0;
    display: flex;
    flex-direction: column;
}
.tabstrip{
    height: 40px;
    flex: none;
    display: flex;
    align-items: flex-start;
    padding-top: 6px;
    background: #1f2020;
    color: #c6c6c6;
    font-size: 14px;
}
.tab-search{
    width: 28px;
    height: 28px;
    margin: 0 2px 0 6px;
    flex: none;
    display: flex;
    align-items: center;
    justify-content: center;
    padding: 0;
    border: 0;
    border-radius: 10px;
    background: #3a3a3a;
}
.tab{
    position: relative;
    width: 162.8px;
    height: 34px;
    flex: none;
    display: flex;
    align-items: flex-start;
    padding: 6px 0 0 12px;
}
.tab::after{
    content: "";
    position: absolute;
    right: 0;
    top: 6px;
    width: 1px;
    height: 16px;
    background: #4a4a4a;
}
.tab-noline::after{
    display: none;
}
.favicon{
    width: 16px;
    height: 16px;
    flex: none;
}
.tab-title{
    width: 88px;
    margin-left: 8px;
    margin-top: -2px;
    height: 20px;
    line-height: 20px;
    white-space: nowrap;
    overflow: hidden;
    flex: none;
    -webkit-mask-image: linear-gradient(90deg, #000 82%, transparent 100%);
    mask-image: linear-gradient(90deg, #000 82%, transparent 100%);
}
.tab-x{
    width: 16px;
    margin-left: 13px;
    font-size: 12px;
    line-height: 16px;
    text-align: center;
    color: #d4d4d4;
}
.tab-active{
    width: 157px;
    margin-left: 2px;
    padding-left: 10px;
    border-radius: 10px 10px 0 0;
    background: #3a3a3a;
    color: #dedede;
}
.tab-active .tab-title{
    width: 95px;
    -webkit-mask-image: none;
    mask-image: none;
}
.tab-active .tab-x{
    margin-left: 4px;
}
.tab-active::before,
.tab-active::after{
    content: "";
    position: absolute;
    top: auto;
    bottom: 0;
    width: 10px;
    height: 10px;
    background: radial-gradient(circle at 0 0, transparent 10px, #3a3a3a 10.5px);
}
.tab-active::before{
    left: -10px;
    right: auto;
}
.tab-active::after{
    right: -10px;
    background: radial-gradient(circle at 100% 0, transparent 10px, #3a3a3a 10.5px);
}
.tab-new{
    margin-left: 14px;
    font-size: 20px;
    line-height: 28px;
    color: #dedede;
}
.window-btns{
    margin-left: auto;
    display: flex;
    align-items: center;
    gap: 21px;
    height: 28px;
    padding-right: 12px;
}
.toolbar{
    height: 47px;
    flex: none;
    display: flex;
    align-items: center;
    padding: 0 20px 1px 14px;
    gap: 20px;
    border-radius: 10px 10px 0 0;
    border-bottom: 1px solid #4a4a4a;
    background: #3a3a3a;
}
.omnibox{
    flex: 1;
    height: 34px;
    margin-left: -2px;
    display: flex;
    align-items: center;
    padding: 0 16px 0 5px;
    border-radius: 17px;
    background: #2a2a2a;
    color: #e4e4e4;
    font-size: 14px;
}
.site-info{
    width: 24px;
    height: 24px;
    display: flex;
    align-items: center;
    justify-content: center;
    border-radius: 50%;
    background: #3d3d3d;
}
.url{
    margin-left: 8px;
    letter-spacing: -0.13px;
}
.star{
    margin-left: auto;
}
.avatar{
    width: 20px;
    height: 20px;
    margin-left: -3px;
    display: flex;
    align-items: center;
    justify-content: center;
    border-radius: 50%;
    background: #1c46a8;
    color: #e8eeff;
    font-size: 10px;
}
.kebab{
    display: flex;
    flex-direction: column;
    gap: 2px;
    margin-left: 4.5px;
}
.kebab i{
    width: 3px;
    height: 3px;
    border-radius: 50%;
    background: #c8c8c8;
}

/* the portfolio page */
.page{
    flex: 1;
    min-height: 0;
    display: flex;
    background: linear-gradient(90deg, #eaeafc, #e3effb);
    font-family: "Liberation Sans", Arial, sans-serif;
}
.sidebar{
    width: 180px;
    flex: none;
    padding-top: 48px;
    background: #212738;
    box-shadow: 2px 0 6px rgba(20, 20, 60, 0.2);
}
.logo{
    width: 60px;
    height: 60px;
    margin: 0 auto 5.5px;
    display: flex;
    flex-direction: column;
    align-items: center;
    padding-top: 14px;
    border-radius: 50%;
    background: #101418;
}
.logo-ya{
    font-size: 23px;
    line-height: 23px;
    font-weight: bold;
    letter-spacing: -1.5px;
    background: linear-gradient(100deg, #f7c41a 0%, #f57c1a 40%, #1aa6b8 60%, #1a6fc0 100%);
    -webkit-background-clip: text;
    background-clip: text;
    color: transparent;
}
.logo-name{
    font-size: 4.5px;
    line-height: 6px;
    font-weight: bold;
    letter-spacing: 0.8px;
    color: #d4d4d4;
}
.side-nav{
    display: flex;
    flex-direction: column;
    gap: 11.5px;
}
.nav-item{
    min-height: 43px;
    display: flex;
    align-items: center;
    gap: 10.5px;
    padding: 10px 16px;
    color: #d1d5db;
    font-size: 16px;
    line-height: 18px;
    text-decoration: none;
}
.nav-item-active{
    color: #ffd700;
    font-weight: bold;
}
.nav-item-wrap{
    gap: 10px;
    padding-right: 0;
}
.nav-icon{
    width: 22px;
    height: 22px;
    flex: none;
    fill: currentColor;
}
.nav-icon-small{
    width: 18px;
    height: 18px;
}
.content{
    flex: 1;
    min-width: 0;
    padding: 16px 16px 0;
}
.hero{
    padding-top: 32px;
    background: linear-gradient(135deg, #1f2739, #000000);
}
.hero-inner{
    width: 664px;
    height: 1070px;
    margin: 0 auto;
    display: flex;
    flex-direction: column;
    align-items: center;
    justify-content: center;
    background: linear-gradient(135deg, #1f2739, #000000);
    text-align: center;
}
.hero-title{
    margin: 0 0 35.5px;
    color: #ffffff;
    font-size: 48px;
    line-height: 57.6px;
    font-weight: bold;
}
.hero-sub{
    width: 560px;
    margin: 0 0 31.5px;
    color: #d1d5db;
    font-size: 20.8px;
    line-height: 24px;
}
.hero-links{
    display: grid;
    grid-template-columns: repeat(5, 29px);
    gap: 24px;
    justify-items: center;
    fill: #ffffff;
}
.scrollbar{
    width: 15px;
    flex: none;
    display: flex;
    flex-direction: column;
    align-items: center;
    background: #2e2e2e;
}
.arrow-up{
    margin-top: 6px;
    border: 5px solid transparent;
    border-top: 0;
    border-bottom: 5px solid #a0a0a0;
}
.thumb{
    width: 9px;
    height: 140px;
    margin-top: 7px;
    border-radius: 5px;
    background: #9e9e9e;
}
.arrow-down{
    margin-top: auto;
    margin-bottom: 5px;
    border: 5px solid transparent;
    border-bottom: 0;
    border-top: 5px solid #a0a0a0;
}
```
